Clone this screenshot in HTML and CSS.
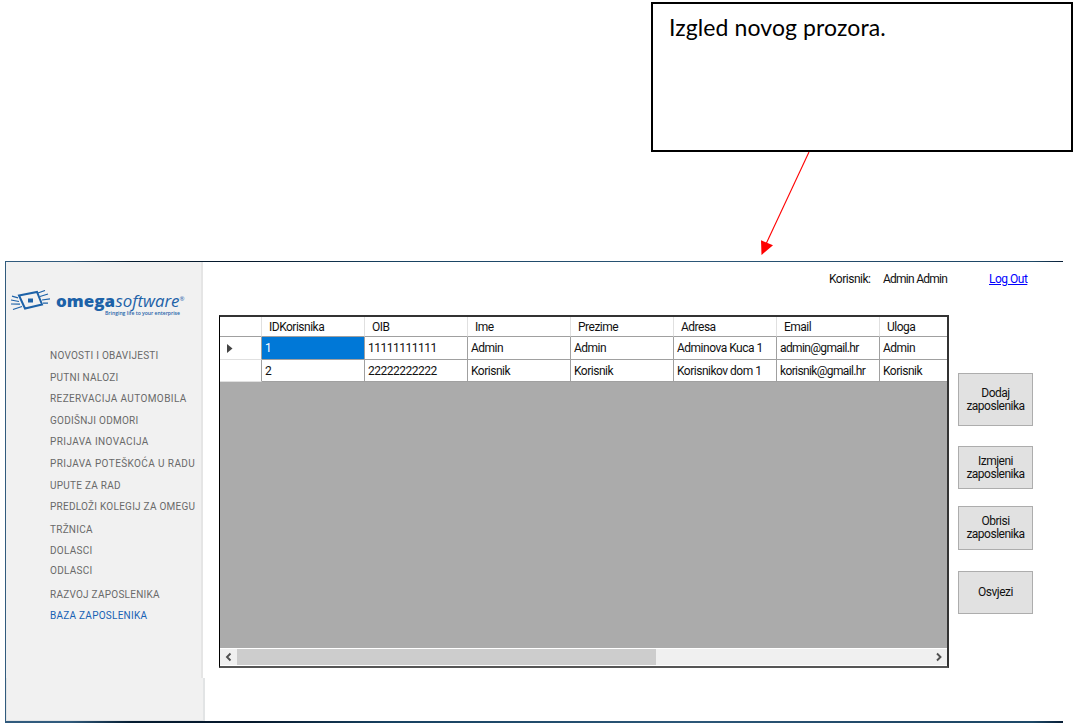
FILE: index.html
```html
<!DOCTYPE html>
<html lang="hr">
<head>
<meta charset="utf-8">
<title>Baza zaposlenika</title>
<link rel="stylesheet" href="styles.css">
</head>
<body>
<div class="callout">Izgled novog prozora.</div>
<svg class="arrow" width="60" height="110" viewBox="0 0 60 110"><path d="M54 0 11 92" stroke="#f00" stroke-width="1.1"/><path d="M6 88.3 18 93.3 6.5 103Z" fill="#f00"/></svg>
<div class="window">
  <aside class="sidebar">
    <div class="side-main">
      <svg class="logo" width="180" height="30" viewBox="0 0 180 30">
        <g fill="none" stroke="#1d62a8" stroke-width="1.5">
          <path d="M13 5.500 31 2 36 14.500 19 18.500Z" stroke-width="2"/>
          <path d="M6 6.200 12 7.800M5 10 13 11.500M5 14 14 14.200M7 19.500 16 16.500M32 3 39 .5M34 6.500 42 4M36 10 44 8.800M37 13.200 42 13.200" stroke-width="1.200"/>
        </g>
        <path d="M22 8.500h5v4h-5z" fill="#1d62a8"/>
        <text x="50" y="17" class="logo-bold" textLength="59" lengthAdjust="spacingAndGlyphs">omega</text>
        <text x="109.500" y="17" class="logo-light" textLength="64" lengthAdjust="spacingAndGlyphs">software</text>
        <text x="173.500" y="11" class="logo-mark">®</text>
        <text x="99" y="25" class="logo-tag" textLength="75" lengthAdjust="spacingAndGlyphs">Bringing life to your enterprise</text>
      </svg>
      <nav class="menu">
        <a>NOVOSTI I OBAVIJESTI</a><a>PUTNI NALOZI</a><a class="wide">REZERVACIJA AUTOMOBILA</a><a>GODIŠNJI ODMORI</a><a class="wide">PRIJAVA INOVACIJA</a><a class="wide">PRIJAVA POTEŠKOĆA U RADU</a><a>UPUTE ZA RAD</a><a>PREDLOŽI KOLEGIJ ZA OMEGU</a><a>TRŽNICA</a><a>DOLASCI</a><a>ODLASCI</a><a>RAZVOJ ZAPOSLENIKA</a><a class="active">BAZA ZAPOSLENIKA</a>
      </nav>
    </div>
    <div class="side-foot"></div>
  </aside>
  <main class="content">
    <header class="userbar"><span class="role">Korisnik:</span><span class="name">Admin Admin</span><a class="logout">Log Out</a></header>
    <div class="workspace">
      <section class="datagrid">
        <div class="row head"><span></span><span>IDKorisnika</span><span>OIB</span><span>Ime</span><span>Prezime</span><span>Adresa</span><span>Email</span><span>Uloga</span></div>
        <div class="row"><span class="marker"><svg width="6" height="10" viewBox="0 0 6 10"><path d="M0 0 5.500 4.500 0 9Z" fill="#444"/></svg></span><span class="selected">1</span><span class="num">11111111111</span><span>Admin</span><span>Admin</span><span>Adminova Kuca 1</span><span class="mail">admin@gmail.hr</span><span>Admin</span></div>
        <div class="row"><span class="marker"></span><span>2</span><span class="num">22222222222</span><span>Korisnik</span><span>Korisnik</span><span>Korisnikov dom 1</span><span class="mail">korisnik@gmail.hr</span><span>Korisnik</span></div>
        <div class="scrollbar">
          <svg width="17" height="16" viewBox="0 0 17 16"><path d="M10.500 4.500 7 8l3.500 3.500" fill="none" stroke="#505050" stroke-width="1.900"/></svg>
          <div class="thumb"></div>
          <svg class="right" width="17" height="16" viewBox="0 0 17 16"><path d="M7 4.500 10.500 8 7 11.500" fill="none" stroke="#505050" stroke-width="1.900"/></svg>
        </div>
      </section>
      <div class="actions"><button>Dodaj<br>zaposlenika</button><button>Izmjeni<br>zaposlenika</button><button>Obrisi<br>zaposlenika</button><button>Osvjezi</button></div>
    </div>
  </main>
</div>
</body>
</html>
```
FILE: styles.css
```css
* { box-sizing: border-box; }
body { margin: 0; padding: 2px 0 0 5px; width: 1074px; height: 727px; overflow: hidden; background: #fff; font: 12px/13px Roboto, "Liberation Sans", sans-serif; letter-spacing: -.5px; color: #111; }
.callout { width: 422px; height: 150px; margin-left: 646px; border: 2px solid #000; padding: 9px 16px; font: 23px/28px Lato, sans-serif; letter-spacing: .1px; color: #000; }
.arrow { position: absolute; left: 755px; top: 152px; }
.window { display: flex; width: 1058px; height: 462px; margin-top: 109px; border: solid; border-width: 1px 0 2px 1px; border-image: linear-gradient(90deg, #315b7d 0, #315b7d 6%, #041c31 12%, #06182b 23%, #174160 36%, #2c5778 65%, #204766 85%, #1d4968 97%, #071c34) 1; }
.sidebar { width: 199px; flex: none; }
.side-main { width: 197px; height: 416px; background: #f1f1f1; border-right: 2px solid #e5e5e5; padding-top: 28px; }
.side-foot { width: 199px; height: 43px; background: #f1f1f1; border: solid #e2e4e5; border-width: 0 2px 1px 1px; }
.logo { display: block; width: 180px; height: 30px; fill: #1d62a8; letter-spacing: 0; }
.logo-bold { font: 800 15px "Open Sans", sans-serif; }
.logo-light { font: italic 15.5px "Open Sans", sans-serif; }
.logo-mark { font: 6px "Open Sans", sans-serif; }
.logo-tag { font: 600 5.5px "Open Sans", sans-serif; }
.menu { display: grid; grid-template-rows: 22px 21px 22px 21px 22px 22px 21px 23px 21px 20px 24px 21px 20px; margin: 26px 0 0 44px; font-size: 10px; line-height: 20px; letter-spacing: .25px; color: #696969; white-space: nowrap; }
.menu .wide { letter-spacing: .4px; }
.menu .active { color: #1762b4; }
.content { flex: 1; padding-left: 14px; }
.userbar { display: flex; height: 53px; padding: 11px 0 0 610px; white-space: nowrap; }
.role { width: 54px; }
.name { width: 106px; letter-spacing: -.75px; }
.logout { color: #00f; text-decoration: underline; }
.workspace { display: flex; gap: 9px; }
.datagrid { display: flex; flex-direction: column; width: 730px; height: 353px; background: #ababab; border: solid #333; border-width: 2px 2px 2px 1px; border-left-color: #000; border-bottom-color: #555; }
.row { display: grid; grid-template-columns: 42px repeat(6, 103px) 1fr; height: 22px; }
.row:nth-child(2) { height: 23px; }
.row span { background: #fff; border: solid #a0a0a0; border-width: 0 1px 1px 0; padding: 5px 0 0 3px; white-space: nowrap; }
.row span:last-child { border-right: 0; }
.row.head { height: 20px; }
.row.head span { padding: 4px 0 0 7px; border-right-color: #e0e0e0; }
.row .marker { padding: 7px 0 0 7px; border-bottom-color: #e0e0e0; }
.row .mail { letter-spacing: -.63px; }
.marker svg { display: block; }
.row .selected { background: #0078d7; color: #fff; }
.scrollbar { display: flex; margin-top: auto; height: 18px; border: solid #fff; border-width: 1px 0; background: #f0f0f0; }
.thumb { width: 419px; background: #cdcdcd; }
.right { margin-left: auto; }
.actions { display: flex; flex-direction: column; padding-top: 58px; }
.actions button { width: 75px; height: 43px; margin: 0 0 17px; padding: 0; border: 1px solid #adadad; background: #e1e1e1; color: #111; font: inherit; letter-spacing: -.5px; }
.actions button:nth-child(1) { height: 53px; margin-bottom: 20px; }
.actions button:nth-child(3) { height: 44px; margin-bottom: 21px; }
```
